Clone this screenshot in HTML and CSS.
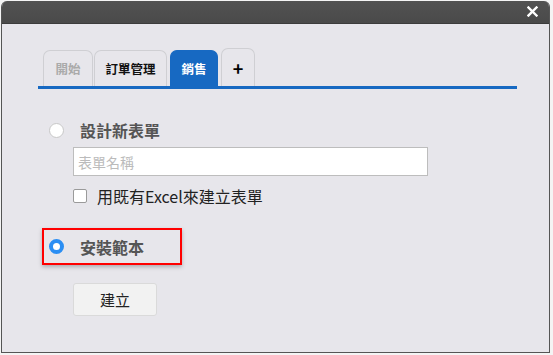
FILE: index.html
```html
<!DOCTYPE html>
<html lang="zh-Hant">
<head>
<meta charset="UTF-8" />
<title>建立表單</title>
<link rel="stylesheet" href="styles.css">
</head>
<body>
<div class="window">
  <div class="titlebar">
    <svg class="close" width="11" height="11" viewBox="0 0 11 11">
      <path d="M1.5 1.5 L9.5 9.5 M9.5 1.5 L1.5 9.5" stroke="#fff" stroke-width="2.4" stroke-linecap="square" />
    </svg>
  </div>

  <div class="content">
    <div class="tabs">
      <div class="tab tab-disabled">開始</div>
      <div class="tab tab-orders">訂單管理</div>
      <div class="tab tab-active">銷售</div>
      <div class="tab tab-add">+</div>
    </div>

    <div class="form">
      <label class="option">
        <span class="radio"></span>
        <span class="option-text">設計新表單</span>
      </label>

      <input class="name-input" type="text" placeholder="表單名稱" />

      <label class="check-row">
        <span class="checkbox"></span>
        <span class="check-text">用既有Excel來建立表單</span>
      </label>

      <label class="option option-marked">
        <span class="radio radio-on"></span>
        <span class="option-text">安裝範本</span>
      </label>

      <button class="create-btn">建立</button>
    </div>
  </div>
</div>
</body>
</html>
```

FILE: styles.css
```css
body {
  margin: 0;
  background: #f4f4f4;
  font-family: "Noto Sans CJK TC", "Noto Sans", sans-serif;
}
.window {
  width: 547px;
  height: 351px;
  margin: 1px 0 0 1px;
  border: 1px solid #555;
  border-top: none;
  border-radius: 6px 6px 0 0;
  background: #e7e6eb;
  overflow: hidden;
}
.titlebar {
  height: 22px;
  background: linear-gradient(#525252, #4a4a4a);
  border-bottom: 1px solid #3c3c3c;
  display: flex;
  justify-content: flex-end;
  align-items: flex-start;
}
.close {
  margin: 5px 11px 0 0;
}
.content {
  padding: 24px 0 0 36px;
}

/* --- Tabs --- */
.tabs {
  width: 479px;
  height: 41px;
  display: flex;
  align-items: flex-end;
  padding-left: 5px;
  box-sizing: border-box;
  border-bottom: 3px solid #1769c2;
}
.tab {
  height: 36px;
  box-sizing: border-box;
  border: 1px solid #cfcfd3;
  border-bottom: none;
  border-radius: 7px 7px 0 0;
  display: flex;
  align-items: center;
  justify-content: center;
  font-size: 12.5px;
  font-weight: bold;
  color: #111;
  margin-right: 3px;
}
.tab-disabled {
  width: 50px;
  color: #aaa;
  margin-right: 1px;
}
.tab-orders {
  width: 73px;
}
.tab-active {
  width: 48px;
  background: #1769c2;
  border-color: #1769c2;
  color: #fff;
}
.tab-add {
  width: 34px;
  height: 38px;
  font-size: 18px;
  color: #000;
}

/* --- Form --- */
.form {
  display: flex;
  flex-direction: column;
  align-items: flex-start;
  padding-left: 11px;
}
.option {
  display: flex;
  align-items: center;
  height: 20px;
  margin-top: 31px;
  gap: 16px;
}
.option-text {
  font-size: 16px;
  font-weight: bold;
  color: #555;
}
.radio {
  width: 13px;
  height: 13px;
  border-radius: 50%;
  border: 1px solid #c8c8c8;
  background: #fff;
}
.radio-on {
  width: 7px;
  height: 7px;
  border: 4.5px solid #2b8ef3;
  background: #fff;
}
.name-input {
  margin: 7px 0 0 24px;
  width: 355px;
  height: 29px;
  box-sizing: border-box;
  border: 1px solid #bdbdbd;
  padding: 0 4px;
  font-family: inherit;
  font-size: 14px;
  background: #fff;
}
.name-input::placeholder {
  color: #bbb;
}
.check-row {
  display: flex;
  align-items: center;
  height: 20px;
  margin: 10px 0 0 24px;
  gap: 10px;
}
.checkbox {
  width: 12px;
  height: 12px;
  border: 1px solid #9a9a9a;
  border-radius: 2px;
  background: #fff;
}
.check-text {
  font-size: 16px;
  color: #222;
}
.option-marked {
  margin: 22px 0 0 -7px;
  height: 33px;
  width: 131px;
  padding-left: 5px;
  box-sizing: content-box;
  border: 2px solid #f00;
  box-shadow: 0 2px 4px rgba(0,0,0,0.25);
}
.create-btn {
  margin: 18px 0 0 24px;
  width: 84px;
  height: 33px;
  background: #f2f2f2;
  border: 1px solid #dadada;
  border-radius: 3px;
  font-family: inherit;
  font-size: 15px;
  color: #222;
}
```
